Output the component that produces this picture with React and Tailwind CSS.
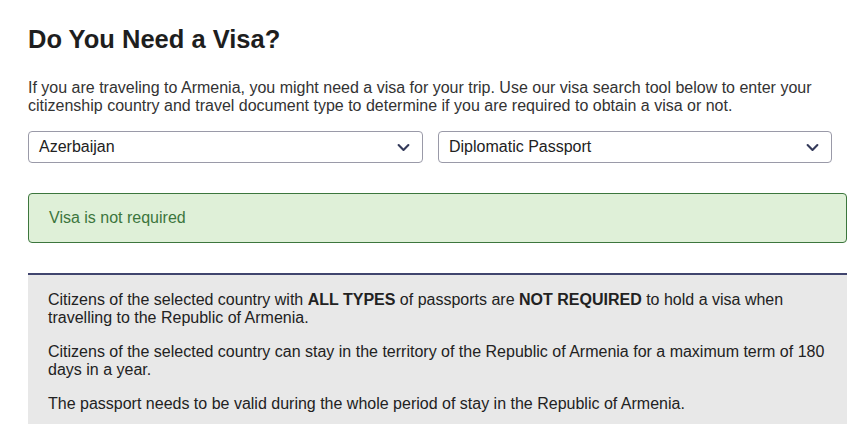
import React from 'react';

const Chevron = () => (
  <svg className="w-[13px] h-[9px]" viewBox="0 0 16 10" fill="none">
    <path d="M2 2l6 6 6-6" stroke="#343a5a" strokeWidth="2.6" strokeLinecap="round" strokeLinejoin="round" />
  </svg>
);

export default function App() {
  return (
    <div className="min-h-screen bg-white text-[#222] font-['Liberation_Sans',Arial,sans-serif]">
      <div className="pl-[28px] pr-[12px] pt-[23px]">
        <h1 className="text-[25.5px] leading-[33px] font-bold text-[#1e1e1e]">Do You Need a Visa?</h1>

        <p className="mt-[23px] text-[16px] leading-[18px] text-[#333]">
          If you are traveling to Armenia, you might need a visa for your trip. Use our visa search tool below to enter your
          citizenship country and travel document type to determine if you are required to obtain a visa or not.
        </p>

        <div className="mt-[16px] flex gap-[15px]">
          <div className="w-[395px] h-[32px] border border-[#9a9aa8] rounded-[4px] flex items-center justify-between pl-[10px] pr-[12px] text-[16px] text-[#222]">
            <span>Azerbaijan</span>
            <Chevron />
          </div>
          <div className="w-[394px] h-[32px] border border-[#9a9aa8] rounded-[4px] flex items-center justify-between pl-[10px] pr-[12px] text-[16px] text-[#222]">
            <span>Diplomatic Passport</span>
            <Chevron />
          </div>
        </div>

        <div className="mt-[30px] h-[50px] border border-[#3c763d] bg-[#dff0d8] rounded-[4px] flex items-center pl-[20px] text-[16px] text-[#3c763d]">
          Visa is not required
        </div>

        <div className="mt-[30px] border-t-2 border-[#40456e] bg-[#e8e8e8] pl-[20px] pr-[20px] pt-[16px] pb-[16px] text-[16px] leading-[18px] text-[#222]">
          <p>
            Citizens of the selected country with <b>ALL TYPES</b> of passports are <b>NOT REQUIRED</b> to hold a visa when
            travelling to the Republic of Armenia.
          </p>
          <p className="mt-[16px]">
            Citizens of the selected country can stay in the territory of the Republic of Armenia for a maximum term of 180
            days in a year.
          </p>
          <p className="mt-[16px]">The passport needs to be valid during the whole period of stay in the Republic of Armenia.</p>
        </div>
      </div>
    </div>
  );
}
